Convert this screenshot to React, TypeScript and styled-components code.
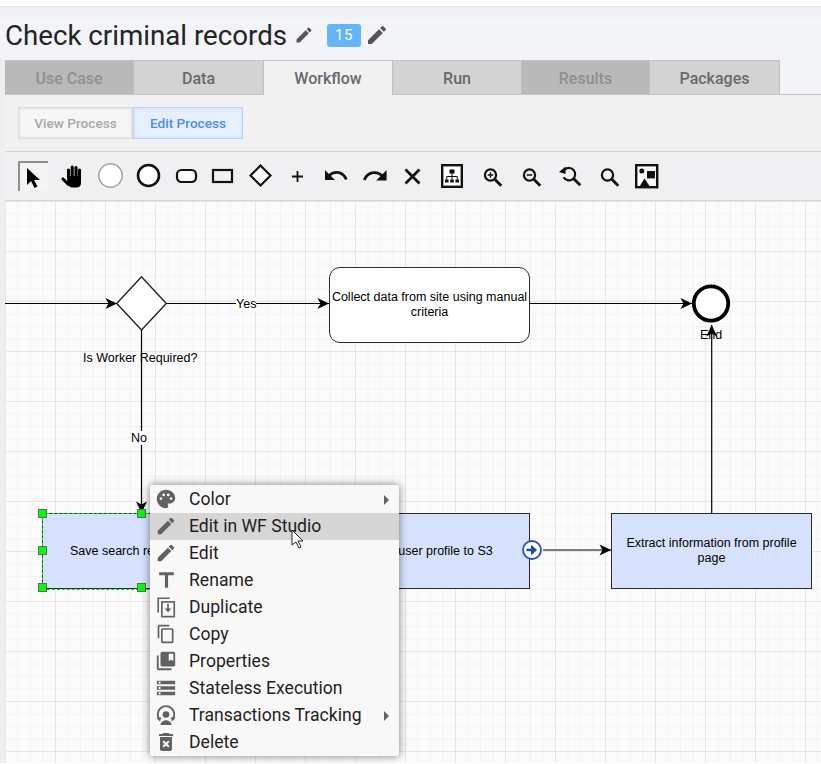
import React from "react";
import styled, { createGlobalStyle } from "styled-components";
import {
  MdPalette,
  MdEdit,
  MdTitle,
  MdContentCopy,
  MdCollectionsBookmark,
  MdStorage,
  MdDeleteForever,
  MdArrowRight,
} from "react-icons/md";

const GlobalStyle = createGlobalStyle`
  html, body { margin: 0; padding: 0; background: #fff; }
  body { font-family: Roboto, "Liberation Sans", sans-serif; overflow: hidden; }
`;

const Page = styled.div`
  width: 821px;
  height: 764px;
  padding-top: 6px;
  box-sizing: border-box;
  overflow: hidden;
  position: relative;
`;

const Shell = styled.div`
  border-top: 1px solid #e6e7ea;
  background: #eceef1;
  padding-left: 5px;
  height: 757px;
  box-sizing: border-box;
  display: flex;
  flex-direction: column;
`;

const Header = styled.div`
  height: 53px;
  margin-left: -5px;
  padding: 3px 0 0 5px;
  background: linear-gradient(#eff0f4 0 10px, #f2f4f8 10px);
  display: flex;
  align-items: center;
  box-sizing: border-box;
`;

const Title = styled.h1`
  margin: 2px 6.5px 0 0;
  font-size: 27.7px;
  line-height: 34px;
  font-weight: 400;
  color: #242424;
`;

const Badge = styled.span`
  background: #62b5f6;
  color: #fff;
  font-size: 15px;
  letter-spacing: 0.5px;
  width: 34px;
  height: 23px;
  border-radius: 3px;
  display: flex;
  align-items: center;
  justify-content: center;
  margin: 0 4px 0 13.5px;
`;

const TabRow = styled.div`
  display: flex;
  height: 35px;
  background: #f2f4f8;
  border-bottom: 1px solid #c4c4c4;
  box-sizing: border-box;
`;

const Tab = styled.div<{ $state: "on" | "off" | "idle"; $width: number }>`
  width: ${(p) => p.$width}px;
  box-sizing: border-box;
  padding-top: 1px;
  margin-bottom: ${(p) => (p.$state === "on" ? "-1px" : "0")};
  display: flex;
  align-items: center;
  justify-content: center;
  font-size: 16px;
  font-weight: 500;
  border-top: 1px solid #c4c4c4;
  border-right: 1px solid #c0c0c0;
  background: ${(p) =>
    p.$state === "on" ? "#f1f1f1" : p.$state === "off" ? "#b9b9b9" : "#d3d3d3"};
  color: ${(p) => (p.$state === "off" ? "#8f8f8f" : "#666a70")};
`;

const ButtonBar = styled.div`
  height: 57px;
  background: #f1f1f1;
  padding: 12px 0 0 13px;
  box-sizing: border-box;
  display: flex;
  align-items: flex-start;
  border-bottom: 1px solid #d4d4d4;
`;

const ModeButton = styled.div<{ $active?: boolean }>`
  height: 32px;
  display: flex;
  align-items: center;
  justify-content: center;
  box-sizing: border-box;
  font-size: 13.6px;
  font-weight: 500;
  width: ${(p) => (p.$active ? "110px" : "115px")};
  color: ${(p) => (p.$active ? "#4f8ff0" : "#a8a8a8")};
  background: ${(p) => (p.$active ? "#e6effd" : "#f6f6f6")};
  border: 1px solid ${(p) => (p.$active ? "#b5d2fb" : "#dcdcdc")};
  box-shadow: inset 0 0 3px ${(p) => (p.$active ? "#c5dcfc" : "#d0d0d0")};
`;

const Toolbar = styled.div`
  height: 49px;
  background: #f0f0f2;
  border-bottom: 1px solid #d4d4d4;
  box-sizing: border-box;
  position: relative;
`;

const ToolIcon = styled.svg<{ $x: number }>`
  position: absolute;
  top: 9px;
  left: ${(p) => p.$x}px;
  width: 30px;
  height: 30px;
`;

const Canvas = styled.div`
  position: relative;
  flex: 1;
  background-color: #fbfbfb;
  background-image:
    linear-gradient(#e6e6e6 1px, transparent 1px),
    linear-gradient(90deg, #e6e6e6 1px, transparent 1px),
    linear-gradient(#f3f3f3 1px, transparent 1px),
    linear-gradient(90deg, #f3f3f3 1px, transparent 1px);
  background-size: 50px 50px, 50px 50px, 12.5px 12.5px, 12.5px 12.5px;
  background-position: 0 0;
  overflow: hidden;
`;

const Wires = styled.svg`
  position: absolute;
  left: 0;
  top: 0;
  width: 816px;
  height: 563px;
`;

const Node = styled.div<{ $x: number; $y: number; $w: number; $h: number; $round?: boolean }>`
  position: absolute;
  left: ${(p) => p.$x}px;
  top: ${(p) => p.$y}px;
  width: ${(p) => p.$w}px;
  height: ${(p) => p.$h}px;
  box-sizing: border-box;
  display: flex;
  align-items: center;
  justify-content: center;
  text-align: center;
  padding: ${(p) => (p.$round ? "0" : "0 4px")};
  font-family: "Liberation Sans", Arial, sans-serif;
  font-size: 12.5px;
  line-height: 15px;
  color: #000;
  background: ${(p) => (p.$round ? "#fff" : "#d6e2fd")};
  border: 1.5px solid #2c2c2c;
  border-radius: ${(p) => (p.$round ? "11px" : "0")};
`;

const SelectedNode = styled(Node)`
  justify-content: flex-start;
  padding-left: 27px;
  white-space: nowrap;

  &::after {
    content: "";
    position: absolute;
    inset: -1.5px;
    border: 1.5px dashed #16d116;
  }
`;

const LinkMarker = styled.svg`
  position: absolute;
  left: 516px;
  top: 339px;
  width: 22px;
  height: 20px;
`;

const Handle = styled.span<{ $x: number; $y: number }>`
  position: absolute;
  left: ${(p) => p.$x}px;
  top: ${(p) => p.$y}px;
  width: 9px;
  height: 9px;
  box-sizing: border-box;
  background: #00ff00;
  border: 1px solid #666;
`;

const WireLabel = styled.span<{ $x: number; $y: number; $fill?: boolean }>`
  position: absolute;
  left: ${(p) => p.$x}px;
  top: ${(p) => p.$y}px;
  font-family: "Liberation Sans", Arial, sans-serif;
  font-size: 12.5px;
  line-height: 14px;
  color: #000;
  white-space: nowrap;
  background: ${(p) => (p.$fill ? "#fff" : "transparent")};
`;

const Menu = styled.div`
  position: absolute;
  left: 150px;
  top: 485px;
  width: 249px;
  padding: 1px 0 0;
  background: #f8f8f8;
  border-radius: 2px;
  box-shadow: 0 0 8px rgba(0, 0, 0, 0.5);
`;

const MenuRow = styled.div<{ $hover?: boolean }>`
  height: 27px;
  padding-bottom: 1px;
  box-sizing: border-box;
  display: flex;
  align-items: center;
  position: relative;
  font-size: 17.6px;
  color: #1f1f1f;
  background: ${(p) => (p.$hover ? "#d6d6d6" : "transparent")};
`;

const MenuIcon = styled.span`
  width: 32px;
  margin-right: 7px;
  display: flex;
  justify-content: center;
  color: #616161;
  font-size: 22px;
`;

const Chevron = styled.span`
  position: absolute;
  right: 1.5px;
  top: 2px;
  display: flex;
  color: #616161;
  font-size: 24px;
`;

const Cursor = styled.svg`
  position: absolute;
  left: 291px;
  top: 529px;
  width: 14px;
  height: 20px;
`;

const tabs: { label: string; state: "on" | "off" | "idle"; width: number }[] = [
  { label: "Use Case", state: "off", width: 129 },
  { label: "Data", state: "idle", width: 130 },
  { label: "Workflow", state: "on", width: 129 },
  { label: "Run", state: "idle", width: 129 },
  { label: "Results", state: "off", width: 128 },
  { label: "Packages", state: "idle", width: 130 },
];

const TransactionsIcon = () => (
  <svg width="22" height="22" viewBox="0 0 24 24" fill="currentColor">
    <path d="M4.6 16.5A9 9 0 1 1 19.4 16.5" fill="none" stroke="currentColor" strokeWidth="2" />
    <path d="M1.6 15l5.4-.4-1.6 4.4zM22.4 15l-5.4-.4 1.6 4.4z" />
    <circle cx="12" cy="11.5" r="3.6" />
    <path d="M6 23c0-3.6 3.8-5.2 6-5.2s6 1.6 6 5.2z" />
  </svg>
);

const DuplicateIcon = () => (
  <svg width="22" height="22" viewBox="0 0 24 24" fill="none" stroke="currentColor" strokeWidth="1.8">
    <path d="M3.5 18V2.5H16" />
    <rect x="7.5" y="6.5" width="13.5" height="16" />
    <path d="M14.2 8.5v8" />
    <path d="M10.5 13.5h7.4l-3.7 4.2z" fill="currentColor" stroke="none" />
  </svg>
);

const menu: { label: string; icon: React.ReactNode; arrow?: boolean; hover?: boolean }[] = [
  { label: "Color", icon: <MdPalette />, arrow: true },
  { label: "Edit in WF Studio", icon: <MdEdit />, hover: true },
  { label: "Edit", icon: <MdEdit /> },
  { label: "Rename", icon: <MdTitle size={25} /> },
  { label: "Duplicate", icon: <DuplicateIcon /> },
  { label: "Copy", icon: <MdContentCopy size={20} /> },
  { label: "Properties", icon: <MdCollectionsBookmark /> },
  { label: "Stateless Execution", icon: <MdStorage /> },
  { label: "Transactions Tracking", icon: <TransactionsIcon />, arrow: true },
  { label: "Delete", icon: <MdDeleteForever size={24} /> },
];

const Lens = ({ cx = 13.5 }: { cx?: number }) => (
  <>
    <circle cx={cx} cy="14" r="5.6" fill="none" stroke="#111" strokeWidth="2.2" />
    <path d={`M${cx + 4.5} 18.5l6.3 6.3`} stroke="#111" strokeWidth="2.8" />
  </>
);

// toolbar glyphs, x is relative to the shell content box
const tools: { x: number; body: React.ReactNode }[] = [
  {
    x: 13,
    body: (
      <>
        <rect x="0" y="0" width="30" height="30" fill="#f4f4f5" />
        <path d="M1 30V1h29" fill="none" stroke="#8f8f8f" strokeWidth="2" />
        <path d="M9 7v17l4-4 3.5 7 3-1.5-3.5-6.5h6z" fill="#000" />
      </>
    ),
  },
  {
    x: 51,
    body: (
      <>
        <path d="M11.5 15h13.5v7c0 3-2 4.5-4.5 4.5h-3.5c-3 0-4.5-1.5-6-4z" fill="#000" />
        <path
          d="M12.5 17V9M16.2 17V6M20 17V6.5M23.5 17V9M12 23l-5-5"
          fill="none"
          stroke="#000"
          strokeWidth="3.1"
          strokeLinecap="round"
        />
      </>
    ),
  },
  { x: 91, body: <circle cx="14.5" cy="14.5" r="11.7" fill="#fff" stroke="#a0a0a0" strokeWidth="1.5" /> },
  { x: 129, body: <circle cx="14.5" cy="14.5" r="10.5" fill="#fff" stroke="#111" strokeWidth="2.6" /> },
  { x: 166, body: <rect x="6" y="9" width="19" height="12" rx="4.5" fill="#fff" stroke="#111" strokeWidth="2.2" /> },
  { x: 203, body: <rect x="5" y="9" width="19" height="12" fill="none" stroke="#111" strokeWidth="2.2" /> },
  { x: 241, body: <path d="M14.5 4.5l10 10-10 10-10-10z" fill="#fff" stroke="#111" strokeWidth="2.2" /> },
  { x: 278, body: <path d="M14.5 10v11M9 15.5h11" fill="none" stroke="#111" strokeWidth="1.8" /> },
  {
    x: 316,
    body: (
      <path
        transform="translate(1.8 1.3) scale(1.1)"
        d="M12.5 8c-2.65 0-5.05.99-6.9 2.6L2 7v9h9l-3.62-3.62c1.39-1.16 3.16-1.88 5.12-1.88 3.54 0 6.55 2.31 7.6 5.5l2.37-.78C21.08 11.03 17.15 8 12.5 8z"
        fill="#111"
      />
    ),
  },
  {
    x: 355,
    body: (
      <path
        transform="translate(1.3 1) scale(1.15)"
        d="M18.4 10.6C16.55 8.99 14.15 8 11.5 8c-4.65 0-8.58 3.03-9.96 7.22L3.9 16c1.05-3.19 4.05-5.5 7.6-5.5 1.95 0 3.73.72 5.12 1.88L13 16h9V7l-3.6 3.6z"
        fill="#111"
      />
    ),
  },
  { x: 393, body: <path d="M7.5 8.5l14 14M21.5 8.5l-14 14" fill="none" stroke="#111" strokeWidth="2.8" /> },
  {
    x: 432,
    body: (
      <>
        <rect x="5.2" y="4.2" width="19.6" height="21.6" fill="#fff" stroke="#111" strokeWidth="2.4" />
        <path d="M12.5 8.5h5v4h-5zM8 18.5h3.5v3H8zM13.2 18.5h3.6v3h-3.6zM18.5 18.5H22v3h-3.5z" fill="#111" />
        <path d="M15 12v6.5M9.7 18.5V15.5h10.6v3" fill="none" stroke="#111" strokeWidth="1" />
      </>
    ),
  },
  {
    x: 472,
    body: (
      <>
        <Lens />
        <path d="M13.5 11.2v5.6M10.7 14h5.6" stroke="#111" strokeWidth="1.3" />
      </>
    ),
  },
  {
    x: 511,
    body: (
      <>
        <Lens />
        <path d="M10.7 14h5.6" stroke="#111" strokeWidth="1.5" />
      </>
    ),
  },
  {
    x: 550,
    body: (
      <>
        <path d="M9.8 8.6a6.2 6.2 0 1 1-1.2 7.6" fill="none" stroke="#111" strokeWidth="2.2" />
        <path d="M4 11l6.5-5.5v7.5z" fill="#111" />
        <path d="M18.5 17.5l6.8 6.8" stroke="#111" strokeWidth="2.8" />
      </>
    ),
  },
  { x: 589, body: <Lens /> },
  {
    x: 627,
    body: (
      <>
        <rect x="4.2" y="4.2" width="21" height="22" fill="#fff" stroke="#111" strokeWidth="2.4" />
        <circle cx="9.8" cy="10" r="2.5" fill="#111" />
        <rect x="15" y="10" width="8" height="7.4" fill="#111" />
        <path d="M12.5 17.5l5 7.5H7.8z" fill="#111" />
      </>
    ),
  },
];

const Arrow = ({ d, tip }: { d: string; tip: string }) => (
  <>
    <path d={d} fill="none" stroke="#000" strokeWidth="1.2" />
    <path d={tip} fill="#000" />
  </>
);

export default function App() {
  return (
    <Page>
      <GlobalStyle />
      <Shell>
        <Header>
          <Title>Check criminal records</Title>
          <MdEdit size={20} color="#555" />
          <Badge>15</Badge>
          <MdEdit size={24} color="#555" />
        </Header>
        <TabRow>
          {tabs.map((t) => (
            <Tab key={t.label} $state={t.state} $width={t.width}>
              {t.label}
            </Tab>
          ))}
        </TabRow>
        <ButtonBar>
          <ModeButton>View Process</ModeButton>
          <ModeButton $active>Edit Process</ModeButton>
        </ButtonBar>
        <Toolbar>
          {tools.map((t) => (
            <ToolIcon key={t.x} $x={t.x} viewBox="0 0 30 30">
              {t.body}
            </ToolIcon>
          ))}
        </Toolbar>
        <Canvas>
          <Wires viewBox="0 0 816 563">
            <Arrow d="M0 102.5H112" tip="M112 102.5l-11.5-5.5 3 5.5-3 5.5z" />
            <path d="M111.7 102.5l24.8-26.8 24.8 26.8-24.8 26.5z" fill="#fff" stroke="#222" strokeWidth="1.4" />
            <Arrow d="M161 102.5H324" tip="M324 102.5l-11.5-5.5 3 5.5-3 5.5z" />
            <Arrow d="M524 102.5H687" tip="M687 102.5l-11.5-5.5 3 5.5-3 5.5z" />
            <Arrow d="M136.5 129V312" tip="M136.5 312l-5.5-11.5 5.5 3 5.5-3z" />
            <circle cx="706" cy="102.5" r="17.2" fill="#fff" stroke="#000" strokeWidth="3.8" />
            <Arrow d="M706.7 312V124" tip="M706.7 124l-5.5 11.5 5.5-3 5.5 3z" />
            <Arrow d="M538 349H606" tip="M606 349l-11.5-5.5 3 5.5-3 5.5z" />
          </Wires>
          <WireLabel $x={231} $y={96} $fill>Yes</WireLabel>
          <WireLabel $x={78} $y={150}>Is Worker Required?</WireLabel>
          <WireLabel $x={126} $y={230} $fill>No</WireLabel>
          <WireLabel $x={695} $y={127}>End</WireLabel>
          <Node $x={324} $y={66} $w={201} $h={76} $round>
            Collect data from site using manual criteria
          </Node>
          <Node $x={324} $y={312} $w={201} $h={76}>
            Save user profile to S3
          </Node>
          <LinkMarker viewBox="0 0 22 20">
            <circle cx="11" cy="10" r="9" fill="#fff" stroke="#2a55a8" strokeWidth="1.8" />
            <path d="M5.5 10h6" stroke="#1f4aa0" strokeWidth="2.4" />
            <path d="M10.5 5.5l5 4.5-5 4.5z" fill="#1f4aa0" stroke="#1f4aa0" strokeWidth="1" />
          </LinkMarker>
          <Node $x={606} $y={312} $w={201} $h={76}>
            Extract information from profile page
          </Node>
          <SelectedNode $x={37} $y={312} $w={200} $h={76}>
            Save search results
          </SelectedNode>
          <Handle $x={33} $y={308} />
          <Handle $x={132} $y={308} />
          <Handle $x={33} $y={345} />
          <Handle $x={33} $y={382} />
          <Handle $x={132} $y={382} />
        </Canvas>
      </Shell>
      <Menu>
        {menu.map((m) => (
          <MenuRow key={m.label} $hover={m.hover}>
            <MenuIcon>{m.icon}</MenuIcon>
            {m.label}
            {m.arrow && (
              <Chevron>
                <MdArrowRight />
              </Chevron>
            )}
          </MenuRow>
        ))}
      </Menu>
      <Cursor viewBox="0 0 14 20">
        <path d="M1 1v15l4-3 3 6 2-1-3-6h5z" fill="#fff" stroke="#222" strokeWidth="1" />
      </Cursor>
    </Page>
  );
}
